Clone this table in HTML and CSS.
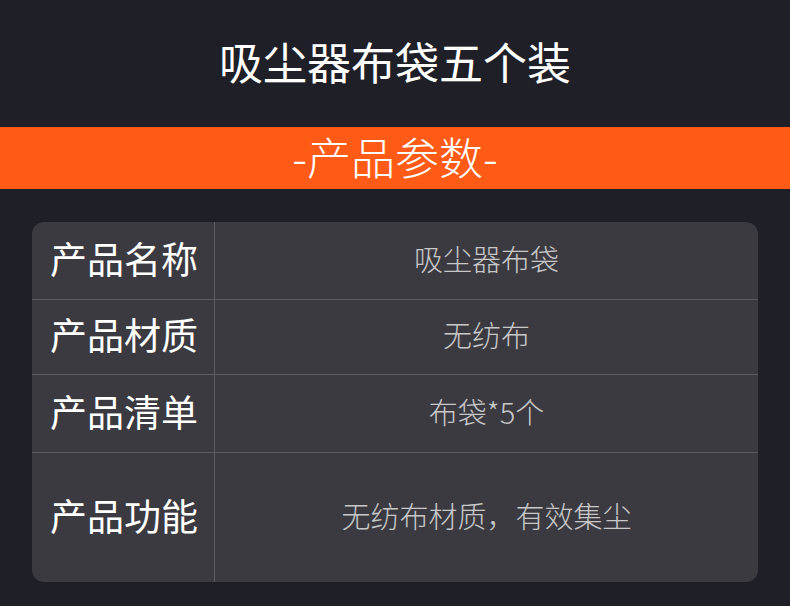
FILE: index.html
```html
<!DOCTYPE html>
<html lang="zh">
<head>
<meta charset="utf-8">
<link rel="stylesheet" href="styles.css">
</head>
<body>
<div class="page">
  <header class="header"><h1 class="title">吸尘器布袋五个装</h1></header>
  <div class="band"><span class="band-text">-产品参数-</span></div>
  <div class="table">
    <div class="row r1"><div class="label">产品名称</div><div class="value">吸尘器布袋</div></div>
    <div class="row r2"><div class="label">产品材质</div><div class="value">无纺布</div></div>
    <div class="row r3"><div class="label">产品清单</div><div class="value">布袋*5个</div></div>
    <div class="row r4"><div class="label">产品功能</div><div class="value">无纺布材质，有效集尘</div></div>
  </div>
</div>
</body>
</html>
```
FILE: styles.css
```css
html, body {
  margin: 0;
  padding: 0;
  background: #1f1f27;
}
body {
  width: 790px;
  height: 606px;
  overflow: hidden;
  font-family: "Noto Sans CJK SC", "Noto Sans", sans-serif;
}
.page {
  display: flex;
  flex-direction: column;
}
.header {
  height: 127px;
  padding-bottom: 0;
  box-sizing: border-box;
  display: flex;
  align-items: center;
  justify-content: center;
}
.title {
  margin: 0 0 6px 0;
  color: #ffffff;
  font-size: 44px;
  font-weight: 400;
  line-height: 1;
}
.band {
  height: 62px;
  background: #ff5a16;
  display: flex;
  align-items: center;
  justify-content: center;
}
.band-text {
  color: #ffffff;
  font-size: 44px;
  font-weight: 300;
  line-height: 1;
  margin-bottom: 4px;
}
.table {
  margin: 33px 32px 0 32px;
  background: #3b3a41;
  border-radius: 12px;
  overflow: hidden;
  display: flex;
  flex-direction: column;
}
.row {
  display: grid;
  grid-template-columns: 183px 1fr;
  border-bottom: 1px solid #5c5b62;
}
.row:last-child { border-bottom: none; }
.r1 { height: 77px; }
.r2 { height: 74px; }
.r3 { height: 77px; }
.r4 { height: 129px; }
.label {
  border-right: 1px solid #5c5b62;
  display: flex;
  align-items: center;
  padding: 0 0 5px 18px;
  color: #ffffff;
  font-size: 37px;
  font-weight: 400;
  line-height: 1;
}
.value {
  display: flex;
  align-items: center;
  justify-content: center;
  padding-bottom: 5px;
  color: #c8c8c8;
  font-size: 29px;
  font-weight: 300;
  line-height: 1;
}
```
